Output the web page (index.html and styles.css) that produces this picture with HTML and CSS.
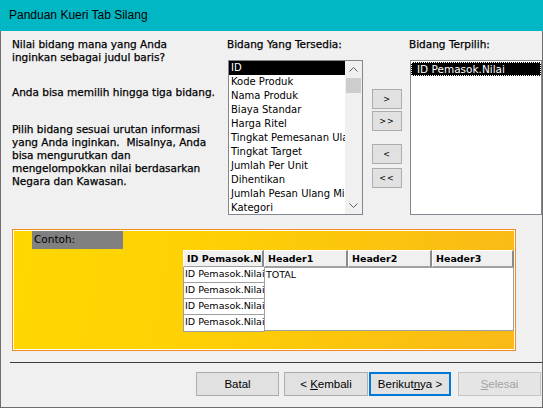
FILE: index.html
```html
<!DOCTYPE html>
<html lang="id">
<head>
    <meta charset="UTF-8">
    <meta name="viewport" content="width=device-width, initial-scale=1.0">
    <title>Panduan Kueri Tab Silang</title>
    <link rel="stylesheet" href="styles.css">
</head>
<body>
    <div class="window">
        <div class="titlebar">Panduan Kueri Tab Silang</div>
        <div class="frame">
            <div class="top">
                <div class="intro">
                    <p>Nilai bidang mana yang Anda<br>inginkan sebagai judul baris?</p>
                    <p class="gap1">Anda bisa memilih hingga tiga bidang.</p>
                    <p class="gap2">Pilih bidang sesuai urutan informasi<br>yang Anda inginkan.&nbsp; Misalnya, Anda<br>bisa mengurutkan dan<br>mengelompokkan nilai berdasarkan<br>Negara dan Kawasan.</p>
                </div>

                <div class="field-col available">
                    <div class="field-label">Bidang Yang Tersedia:</div>
                    <div class="listbox">
                        <ul class="items">
                            <li class="picked">ID</li>
                            <li>Kode Produk</li>
                            <li>Nama Produk</li>
                            <li>Biaya Standar</li>
                            <li>Harga Ritel</li>
                            <li>Tingkat Pemesanan Ulang</li>
                            <li>Tingkat Target</li>
                            <li>Jumlah Per Unit</li>
                            <li>Dihentikan</li>
                            <li>Jumlah Pesan Ulang Minimum</li>
                            <li>Kategori</li>
                        </ul>
                        <div class="scrollbar">
                            <span class="arrow">
                                <svg width="9" height="5" viewBox="0 0 9 5"><polyline points="0.5,4.5 4.5,0.5 8.5,4.5" fill="none" stroke="#606060" stroke-width="1"/></svg>
                            </span>
                            <span class="thumb"></span>
                            <span class="track"></span>
                            <span class="arrow">
                                <svg width="9" height="5" viewBox="0 0 9 5"><polyline points="0.5,0.5 4.5,4.5 8.5,0.5" fill="none" stroke="#606060" stroke-width="1"/></svg>
                            </span>
                        </div>
                    </div>
                </div>

                <div class="move-buttons">
                    <button class="move">&gt;</button>
                    <button class="move second">&gt;&gt;</button>
                    <button class="move third">&lt;</button>
                    <button class="move fourth">&lt;&lt;</button>
                </div>

                <div class="field-col selected">
                    <div class="field-label">Bidang Terpilih:</div>
                    <div class="listbox plain">
                        <ul class="items">
                            <li class="picked focus">ID Pemasok.Nilai</li>
                        </ul>
                    </div>
                </div>
            </div>

            <!-- Sample preview -->
            <div class="sample">
                <div class="sample-label">Contoh:</div>
                <div class="crosstab">
                    <div class="ct-head">
                        <span class="hcell rowhead">ID Pemasok.Nilai</span>
                        <span class="hcell col1">Header1</span>
                        <span class="hcell col2">Header2</span>
                        <span class="hcell col3">Header3</span>
                    </div>
                    <div class="ct-body">
                        <div class="row-heads">
                            <span>ID Pemasok.Nilai</span>
                            <span>ID Pemasok.Nilai</span>
                            <span>ID Pemasok.Nilai</span>
                            <span class="last">ID Pemasok.Nilai</span>
                        </div>
                        <div class="values">TOTAL</div>
                    </div>
                </div>
            </div>

            <div class="separator"></div>

            <div class="footer">
                <button class="btn cancel">Batal</button>
                <button class="btn back">&lt; <u>K</u>embali</button>
                <button class="btn next">Berikut<u>n</u>ya &gt;</button>
                <button class="btn finish" disabled><u>S</u>elesai</button>
            </div>
        </div>
    </div>
</body>
</html>
```

FILE: styles.css
```css
* {
    margin: 0;
    padding: 0;
    box-sizing: border-box;
}
body {
    background: #f0f0f0;
    font-family: "DejaVu Sans", Verdana, sans-serif;
    color: #000;
}
.window {
    width: 543px;
    height: 408px;
    display: flex;
    flex-direction: column;
}
.titlebar {
    height: 31px;
    background: #00b7c3;
    color: #000;
    font-family: "Liberation Sans", Arial, sans-serif;
    font-size: 12px;
    line-height: 31px;
    padding-left: 9px;
}
.frame {
    flex: 1;
    border: 1px solid #6e6e6e;
    border-top: none;
    background: #f0f0f0;
    padding-top: 7px;
    display: flex;
    flex-direction: column;
}
/* top row: intro text, field lists and move buttons */
.top {
    display: flex;
    height: 177px;
}
.intro {
    flex: 0 0 227px;
    padding-left: 11px;
    font-size: 10.5px;
    line-height: 13px;
    -webkit-text-stroke: 0.25px #000;
}
.intro .gap1 {
    margin-top: 22px;
}
.intro .gap2 {
    margin-top: 24px;
}
.field-col.available {
    flex: 0 0 144px;
}
.field-col.selected {
    flex: 1;
}
.field-label {
    font-size: 10.5px;
    line-height: 13px;
    height: 13px;
    margin-bottom: 9px;
    margin-left: -1px;
    white-space: nowrap;
    -webkit-text-stroke: 0.25px #000;
}
.listbox {
    width: 135px;
    height: 155px;
    border: 1px solid #828790;
    background: #fff;
    display: flex;
    overflow: hidden;
}
.listbox.plain {
    width: 132px;
}
.items {
    list-style: none;
    flex: 1;
    overflow: hidden;
    font-size: 10px;
}
.items li {
    height: 14px;
    line-height: 14px;
    padding-left: 2px;
    white-space: nowrap;
    overflow: hidden;
}
.items li.picked {
    background: #000;
    color: #fff;
}
.items li.focus {
    border: 1px dotted #fff;
    line-height: 12px;
    padding-left: 5px;
    margin-top: 1px;
    font-size: 10.5px;
}
.scrollbar {
    flex: 0 0 17px;
    background: #f0f0f0;
    display: flex;
    flex-direction: column;
}
.scrollbar .arrow {
    height: 17px;
    display: flex;
    align-items: center;
    justify-content: center;
}
.scrollbar .thumb {
    height: 15px;
    margin: 0 1px;
    background: #cdcdcd;
}
.scrollbar .track {
    flex: 1;
}
.move-buttons {
    flex: 0 0 38px;
    padding-top: 51px;
    display: flex;
    flex-direction: column;
}
.move {
    width: 30px;
    height: 20px;
    background: #e1e1e1;
    border: 1px solid #adadad;
    font-family: "DejaVu Sans", sans-serif;
    font-size: 8px;
    letter-spacing: 1px;
    color: #000;
}
.move.second {
    margin-top: 2px;
}
.move.third {
    margin-top: 13px;
}
.move.fourth {
    margin-top: 4px;
}
/* sample preview */
.sample {
    margin-top: 14px;
    margin-left: 11px;
    width: 504px;
    height: 122px;
    border: 1px solid #f58a1f;
    box-shadow: inset 0 0 0 1px #fff;
    padding: 1px;
    background:
        linear-gradient(100deg, #ffd700 0%, #fed104 35%, #fcc60c 65%, #f9b917 100%);
}
.sample-label {
    margin-left: 18px;
    width: 91px;
    height: 18px;
    background: #808080;
    font-size: 10.5px;
    line-height: 16px;
    padding-left: 2px;
}
.crosstab {
    margin-left: 169px;
    margin-top: 1px;
    width: 331px;
    font-size: 9.5px;
}
.ct-head {
    display: flex;
    height: 17px;
}
.hcell {
    background: #f0f0f0;
    font-weight: bold;
    line-height: 15px;
    padding-left: 3px;
    border-top: 1px solid #fff;
    border-left: 1px solid #fff;
    border-right: 2px solid #8a8a8a;
    border-bottom: 1px solid #a0a0a0;
    white-space: nowrap;
    overflow: hidden;
}
.hcell.rowhead {
    width: 81px;
    text-overflow: clip;
}
.hcell.col1 {
    width: 84px;
}
.hcell.col2 {
    width: 84px;
}
.hcell.col3 {
    width: 82px;
}
.ct-body {
    display: flex;
    height: 65px;
}
.row-heads {
    width: 82px;
    display: flex;
    flex-direction: column;
}
.row-heads span {
    height: 16px;
    line-height: 14px;
    background: #fff;
    border: 1px solid #a0a0a0;
    border-top: none;
    padding-left: 1px;
    white-space: nowrap;
    overflow: hidden;
}
.row-heads span.last {
    height: 17px;
}
.values {
    flex: 1;
    background: #fff;
    border: 1px solid #a0a0a0;
    border-left: none;
    height: 64px;
    padding-left: 1px;
    line-height: 14px;
}
.separator {
    margin-top: 11px;
    margin-left: 9px;
    height: 1px;
    background: #3c3c3c;
}
/* wizard buttons */
.footer {
    margin-top: 9px;
    padding-left: 195px;
    display: flex;
}
.btn {
    height: 24px;
    width: 83px;
    background: #e1e1e1;
    border: 1px solid #adadad;
    font-family: "Liberation Sans", Arial, sans-serif;
    font-size: 11.5px;
    color: #000;
}
.btn u {
    text-decoration: underline;
}
.btn.back {
    width: 84px;
    margin-left: 5px;
}
.btn.next {
    width: 82px;
    margin-left: 1px;
    border: 2px solid #0078d7;
}
.btn.finish {
    margin-left: 7px;
    color: #a3a3a3;
    background: #e5e5e5;
    border-color: #c4c4c4;
}
```
